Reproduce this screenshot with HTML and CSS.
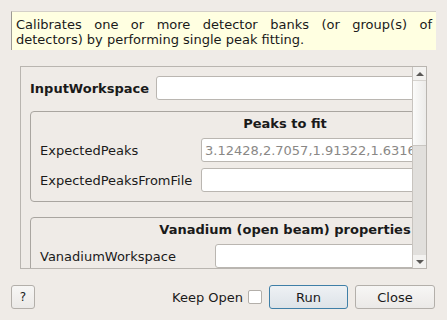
FILE: index.html
```html
<!DOCTYPE html>
<html lang="en">
<head>
  <meta charset="UTF-8" />
  <title>CalibrateRectangularDetectors</title>
  <link rel="stylesheet" href="styles.css">
</head>
<body>
  <div class="dialog">
    <p class="desc">Calibrates one or more detector banks (or group(s) of detectors) by performing single peak fitting.</p>

    <div class="scroll-area">
      <div class="viewport">
        <div class="content">
          <div class="row top-row">
            <label class="bold">InputWorkspace</label>
            <input type="text" class="field">
          </div>

          <div class="group peaks">
            <div class="group-title">Peaks to fit</div>
            <div class="row">
              <label>ExpectedPeaks</label>
              <input type="text" class="field" placeholder="3.12428,2.7057,1.91322,1.6316,1.56205,1.3529,1.24168,1.2100">
            </div>
            <div class="row">
              <label>ExpectedPeaksFromFile</label>
              <input type="text" class="field">
            </div>
          </div>

          <div class="group vanadium">
            <div class="group-title">Vanadium (open beam) properties</div>
            <div class="row">
              <label>VanadiumWorkspace</label>
              <input type="text" class="field">
            </div>
          </div>
        </div>
      </div>
      <div class="scrollbar">
        <div class="sb-btn"><span class="arrow up"></span></div>
        <div class="sb-thumb"></div>
        <div class="sb-trough"></div>
        <div class="sb-btn"><span class="arrow down"></span></div>
      </div>
    </div>

    <div class="footer">
      <button class="btn help">?</button>
      <span class="spacer"></span>
      <label class="keep">Keep Open <span class="check"></span></label>
      <button class="btn run">Run</button>
      <button class="btn close">Close</button>
    </div>
  </div>
</body>
</html>
```

FILE: styles.css
```css
* { margin: 0; padding: 0; box-sizing: border-box; font-family: 'DejaVu Sans', sans-serif; }
body { background: #efebe7; color: #1a1a1a; font-size: 13px; width: 447px; height: 320px; overflow: hidden; }

.dialog { padding: 11px 12px 0 11px; }

.desc {
  background: #ffffe1; border-top: 1px solid #d4d0c8; border-left: 1px solid #9c9a94;
  padding: 5px 4px 3px 4px; line-height: 15px; height: 39px; text-align: justify; width: 425px;
}

.scroll-area {
  margin: 16px 0 0 9px; width: 407px; height: 203px;
  border: 1px solid #b9b5b0; display: flex;
}
.viewport { flex: 1; overflow: hidden; }
.content { width: 560px; padding: 9px 0 0 9px; }

.row { display: flex; align-items: center; height: 24px; margin-bottom: 6px; }
.row:last-child { margin-bottom: 0; }
.row label { flex: none; }
.top-row { margin-bottom: 11px; width: 540px; }
.top-row label { width: 126px; }
.bold { font-weight: bold; }

.field {
  flex: 1; min-width: 0; height: 24px; border: 1px solid #bab6b1; border-radius: 3px; background: #fff;
  font-size: 13px; padding: 0 3px; outline: none;
}
.field::placeholder { color: #8a8886; }

.group {
  border: 1px solid #a9a5a0; border-radius: 4px; width: 510px;
  padding: 5px 9px 9px 9px; margin-bottom: 15px;
}
.group-title { font-weight: bold; text-align: center; height: 14px; line-height: 14px; margin-bottom: 7px; white-space: nowrap; }
.peaks label { width: 161px; }
.vanadium label { width: 175px; }

.scrollbar {
  width: 14px; border-left: 1px solid #c8c4bf; display: flex; flex-direction: column;
  background: #e3e1de;
}
.sb-btn { height: 13px; display: flex; align-items: center; justify-content: center; background: #f3f2f0; }
.sb-thumb { height: 66px; background: linear-gradient(to right, #fbfbfa, #ecebe9); border-top: 1px solid #d6d3cf; border-bottom: 1px solid #c9c6c2; }
.sb-trough { flex: 1; background: #e1dfdc; }
.arrow { width: 0; height: 0; border-left: 4px solid transparent; border-right: 4px solid transparent; }
.arrow.up { border-bottom: 4px solid #5a5856; }
.arrow.down { border-top: 4px solid #5a5856; }

.footer { display: flex; align-items: center; margin-top: 16px; height: 24px; }
.spacer { flex: 1; }
.btn {
  height: 24px; border: 1px solid #b3afaa; border-radius: 3px; font-size: 13px; color: #1a1a1a;
  background: linear-gradient(#f7f6f5, #ebe9e7);
}
.help { width: 24px; font-size: 12px; }
.keep { display: flex; align-items: center; margin-right: 7px; }
.check { width: 14px; height: 14px; border: 1px solid #b3afaa; border-radius: 2px; background: #fff; margin-left: 5px; }
.run { width: 79px; margin-right: 7px; border-color: #3f7fa7; background: linear-gradient(#eef1f4, #dde3e8); }
.close { width: 80px; }
```
